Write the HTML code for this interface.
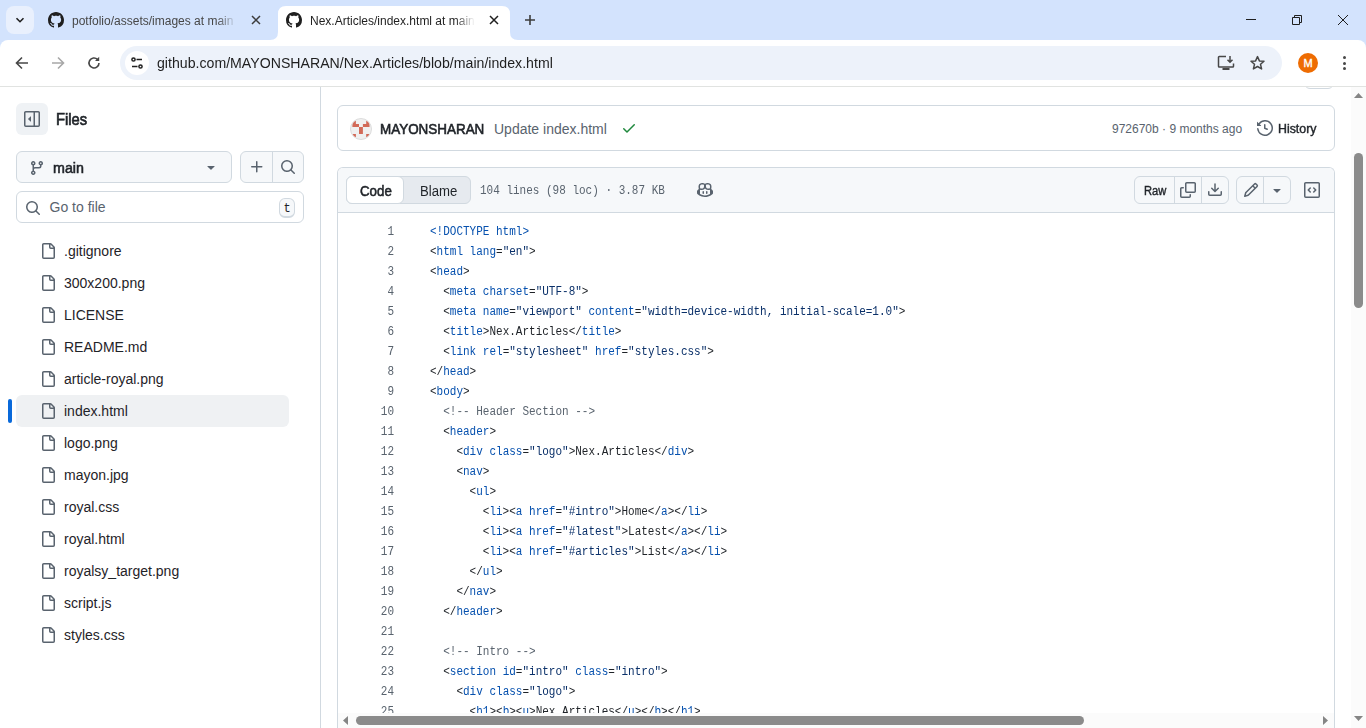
<!DOCTYPE html><html><head><meta charset="utf-8"><style>
*{margin:0;padding:0}
html,body{width:1366px;height:728px;overflow:hidden;background:#fff;position:relative}
.b{position:absolute;display:block}
.t{position:absolute;white-space:pre;line-height:1;}
.ln{position:absolute;left:0;width:56px;text-align:right;font:12px/1 "Liberation Mono",monospace;color:#59636e;white-space:pre;transform:scaleX(0.9167);transform-origin:100% 0}
.cl{position:absolute;left:92px;font:12px/1 "Liberation Mono",monospace;color:#1f2328;white-space:pre;transform:scaleX(0.9167);transform-origin:0 0}
</style></head><body><div class="b" style="left:0px;top:0px;width:1366px;height:48px;background:#d3e3fd"></div>
<div class="b" style="left:6px;top:6px;width:28px;height:28px;background:#e9f0fd;border-radius:8px"></div>
<svg class="b" style="left:14px;top:14px" width="12" height="12" viewBox="0 0 12 12"><path d="M2.5 4.2 6 7.7 9.5 4.2" fill="none" stroke="#1f1f1f" stroke-width="1.6"/></svg>
<svg class="b" style="left:48px;top:12px" width="16" height="16" viewBox="0 0 16 16" fill="#1f1f1f" ><path d="M8 0c4.42 0 8 3.58 8 8a8.013 8.013 0 0 1-5.45 7.59c-.4.08-.55-.17-.55-.38 0-.27.01-1.13.01-2.2 0-.75-.25-1.23-.54-1.48 1.780-.2 3.65-.88 3.65-3.95 0-.88-.31-1.59-.82-2.15.08-.2.36-1.020-.08-2.12 0 0-.67-.22-2.2.82-.64-.18-1.32-.27-2-.27-.68 0-1.36.09-2 .27-1.53-1.03-2.2-.82-2.2-.82-.44 1.1-.16 1.92-.08 2.12-.51.56-.82 1.28-.82 2.15 0 3.06 1.86 3.75 3.64 3.95-.23.2-.44.55-.51 1.07-.46.21-1.61.55-2.33-.66-.15-.24-.6-.83-1.230-.82-.67.01-.27.38.01.53.34.19.73.9.82 1.13.16.45.68 1.31 2.69.94 0 .67.01 1.3.01 1.49 0 .21-.15.45-.55.38A7.995 7.995 0 0 1 0 8c0-4.42 3.58-8 8-8Z"/></svg>
<div class="t" style="left:72px;top:15px;width:163px;height:18px;overflow:hidden;font-size:12px;color:#474747;font-family:'Liberation Sans',sans-serif;-webkit-mask-image:linear-gradient(90deg,#000 145px,transparent 165px)">potfolio/assets/images at main</div>
<svg class="b" style="left:251px;top:15px" width="10" height="10" viewBox="0 0 10 10"><path d="M1 1 9 9M9 1 1 9" stroke="#3c3c3c" stroke-width="1.5"/></svg>
<svg class="b" style="left:270px;top:6px" width="248" height="34" viewBox="0 0 248 34"><path d="M0 34 Q8 34 8 26 V8 Q8 0 16 0 H232 Q240 0 240 8 V26 Q240 34 248 34 Z" fill="#fff"/></svg>
<svg class="b" style="left:286px;top:12px" width="16" height="16" viewBox="0 0 16 16" fill="#1f1f1f" ><path d="M8 0c4.42 0 8 3.58 8 8a8.013 8.013 0 0 1-5.45 7.59c-.4.08-.55-.17-.55-.38 0-.27.01-1.13.01-2.2 0-.75-.25-1.23-.54-1.48 1.780-.2 3.65-.88 3.65-3.95 0-.88-.31-1.59-.82-2.15.08-.2.36-1.020-.08-2.12 0 0-.67-.22-2.2.82-.64-.18-1.32-.27-2-.27-.68 0-1.36.09-2 .27-1.53-1.03-2.2-.82-2.2-.82-.44 1.1-.16 1.92-.08 2.12-.51.56-.82 1.28-.82 2.15 0 3.06 1.86 3.75 3.64 3.95-.23.2-.44.55-.51 1.07-.46.21-1.61.55-2.33-.66-.15-.24-.6-.83-1.230-.82-.67.01-.27.38.01.53.34.19.73.9.82 1.13.16.45.68 1.31 2.69.94 0 .67.01 1.3.01 1.49 0 .21-.15.45-.55.38A7.995 7.995 0 0 1 0 8c0-4.42 3.58-8 8-8Z"/></svg>
<div class="t" style="left:310px;top:15px;width:165px;height:18px;overflow:hidden;font-size:12px;color:#1f1f1f;font-family:'Liberation Sans',sans-serif;-webkit-mask-image:linear-gradient(90deg,#000 145px,transparent 165px)">Nex.Articles/index.html at main</div>
<svg class="b" style="left:489px;top:15px" width="10" height="10" viewBox="0 0 10 10"><path d="M1 1 9 9M9 1 1 9" stroke="#1f1f1f" stroke-width="1.5"/></svg>
<svg class="b" style="left:524px;top:14px" width="12" height="12" viewBox="0 0 12 12"><path d="M6 1V11M1 6H11" stroke="#3c3c3c" stroke-width="1.6"/></svg>
<div class="b" style="left:1246px;top:19px;width:10px;height:1px;background:#1f1f1f"></div>
<svg class="b" style="left:1291px;top:14px" width="12" height="12" viewBox="0 0 12 12"><path d="M1.5 3.5h7v7h-7z M3.5 3.5V1.5h7v7h-2" fill="none" stroke="#1f1f1f" stroke-width="1"/></svg>
<svg class="b" style="left:1337px;top:14px" width="12" height="12" viewBox="0 0 12 12"><path d="M1 1 11 11M11 1 1 11" fill="none" stroke="#1f1f1f" stroke-width="1"/></svg>
<div class="b" style="left:0px;top:40px;width:1366px;height:46px;background:#fff;border-radius:8px 8px 0 0"></div>
<div class="b" style="left:0px;top:86px;width:1366px;height:1px;background:#e1e3e1"></div>
<svg class="b" style="left:14px;top:55px" width="16" height="16" viewBox="0 0 16 16"><path d="M14 8H3M8 2.5 2.5 8 8 13.5" fill="none" stroke="#474747" stroke-width="1.6"/></svg>
<svg class="b" style="left:50px;top:55px" width="16" height="16" viewBox="0 0 16 16"><path d="M2 8H13M8 2.5 13.5 8 8 13.5" fill="none" stroke="#a8a8a8" stroke-width="1.6"/></svg>
<svg class="b" style="left:86px;top:55px" width="16" height="16" viewBox="0 0 16 16"><path d="M13 8A5 5 0 1 1 11.5 4.4" fill="none" stroke="#474747" stroke-width="1.6"/><path d="M13.2 1.8V6H9z" fill="#474747"/></svg>
<div class="b" style="left:120px;top:46px;width:1162px;height:34px;background:#edf2fa;border-radius:17px"></div>
<div class="b" style="left:125px;top:51px;width:24px;height:24px;background:#fff;border-radius:12px"></div>
<svg class="b" style="left:129px;top:55px" width="16" height="16" viewBox="0 0 16 16"><g fill="none" stroke="#1f1f1f" stroke-width="1.5"><circle cx="4.5" cy="4.5" r="1.6"/><path d="M7.5 4.5H13"/><circle cx="11.5" cy="11.5" r="1.6"/><path d="M3 11.5H8.5"/></g></svg>
<div class="t" style="left:157px;top:56.15px;font-size:14px;font-weight:400;color:#1f1f1f;font-family:'Liberation Sans', sans-serif;transform:scaleX(1.01);transform-origin:0 0;">github.com/MAYONSHARAN/Nex.Articles/blob/main/index.html</div>
<svg class="b" style="left:1217px;top:55px" width="18" height="16" viewBox="0 0 18 16"><g fill="none" stroke="#474747" stroke-width="1.5"><path d="M9 1.5H2.3A.8.8 0 0 0 1.5 2.3v9a.8.8 0 0 0 .8.8h13.4a.8.8 0 0 0 .8-.8V8.5"/><path d="M13 1v6.2M10.5 4.8l2.5 2.5 2.5-2.5"/></g><rect x="5.5" y="13" width="7" height="2" fill="#474747"/></svg>
<svg class="b" style="left:1249px;top:55px" width="17" height="16" viewBox="0 0 17 16"><path d="M8.5 1.6 10.4 5.9 15 6.3 11.5 9.3 12.6 13.9 8.5 11.5 4.4 13.9 5.5 9.3 2 6.3 6.6 5.9Z" fill="none" stroke="#474747" stroke-width="1.5" stroke-linejoin="round"/></svg>
<div class="b" style="left:1298px;top:53px;width:20px;height:20px;background:#ee6c02;border-radius:10px"></div>
<div class="t" style="left:1303.6px;top:57.89px;font-size:11px;font-weight:400;color:#fff;font-family:'Liberation Sans', sans-serif;-webkit-text-stroke:0.35px #fff;">M</div>
<div class="b" style="left:1342.5px;top:56.0px;width:3px;height:3px;background:#474747;border-radius:2px"></div>
<div class="b" style="left:1342.5px;top:61.5px;width:3px;height:3px;background:#474747;border-radius:2px"></div>
<div class="b" style="left:1342.5px;top:67.0px;width:3px;height:3px;background:#474747;border-radius:2px"></div>
<div class="b" style="left:0px;top:87px;width:1351px;height:641px;background:#fff"></div>
<div class="b" style="left:1303px;top:87px;width:32px;height:3px;overflow:hidden"><div class="b" style="left:1px;top:-27px;width:30px;height:29px;border:1px solid #d1d9e0;border-radius:6px;box-sizing:border-box"></div></div>
<div class="b" style="left:1351px;top:87px;width:15px;height:641px;background:#fbfbfb"></div>
<svg class="b" style="left:1354px;top:93px" width="9" height="5" viewBox="0 0 9 5"><path d="M0 5 4.5 0 9 5Z" fill="#858585"/></svg>
<svg class="b" style="left:1354px;top:716px" width="9" height="5" viewBox="0 0 9 5"><path d="M0 0 4.5 5 9 0Z" fill="#858585"/></svg>
<div class="b" style="left:1354px;top:153px;width:9px;height:155px;background:#8b8b8b;border-radius:5px"></div>
<div class="b" style="left:320px;top:87px;width:1px;height:641px;background:#d1d9e0"></div>
<div class="b" style="left:16px;top:103px;width:32px;height:32px;background:#eff2f5;border-radius:6px"></div>
<svg class="b" style="left:24px;top:111px" width="16" height="16" viewBox="0 0 16 16" fill="#59636e" ><path d="M1.75 0h12.5C15.216 0 16 .784 16 1.75v12.5A1.75 1.75 0 0 1 14.25 16H1.75A1.75 1.75 0 0 1 0 14.25V1.75C0 .784.784 0 1.75 0ZM1.5 1.75v12.5c0 .138.112.25.25.25H9.5v-13H1.75a.25.25 0 0 0-.25.25ZM11 14.5h3.25a.25.25 0 0 0 .25-.25V1.75a.25.25 0 0 0-.25-.25H11Z"/><path d="M7 5.604v4.792a.25.25 0 0 1-.427.177L4.177 8.177a.25.25 0 0 1 0-.354l2.396-2.396A.25.25 0 0 1 7 5.604Z"/></svg>
<div class="t" style="left:56.3px;top:112.46px;font-size:16px;font-weight:400;color:#1f2328;font-family:'Liberation Sans', sans-serif;transform:scaleX(0.92);transform-origin:0 0;-webkit-text-stroke:0.7px #1f2328;">Files</div>
<div class="b" style="left:16px;top:151px;width:216px;height:32px;background:#f6f8fa;border:1px solid #d1d9e0;border-radius:6px;box-sizing:border-box"></div>
<svg class="b" style="left:29px;top:160px" width="16" height="16" viewBox="0 0 16 16" fill="#59636e" ><path d="M9.5 3.25a2.25 2.25 0 1 1 3 2.122V6A2.5 2.5 0 0 1 10 8.5H6a1 1 0 0 0-1 1v1.128a2.251 2.251 0 1 1-1.5 0V5.372a2.25 2.25 0 1 1 1.5 0v1.836A2.493 2.493 0 0 1 6 7h4a1 1 0 0 0 1-1v-.628A2.25 2.25 0 0 1 9.5 3.25Zm-6 0a.75.75 0 1 0 1.5 0 .75.75 0 0 0-1.5 0Zm8.25-.75a.75.75 0 1 0 0 1.5.75.75 0 0 0 0-1.5ZM4.25 12a.75.75 0 1 0 0 1.5.75.75 0 0 0 0-1.5Z"/></svg>
<div class="t" style="left:53.3px;top:160.65px;font-size:14px;font-weight:400;color:#1f2328;font-family:'Liberation Sans', sans-serif;transform:scaleX(1.02);transform-origin:0 0;-webkit-text-stroke:0.55px #1f2328;">main</div>
<svg class="b" style="left:203px;top:159px" width="16" height="16" viewBox="0 0 16 16" fill="#59636e" ><path d="m4.427 7.427 3.396 3.396a.25.25 0 0 0 .354 0l3.396-3.396A.25.25 0 0 0 11.396 7H4.604a.25.25 0 0 0-.177.427Z"/></svg>
<div class="b" style="left:240px;top:151px;width:64px;height:32px;background:#f6f8fa;border:1px solid #d1d9e0;border-radius:6px;box-sizing:border-box"></div>
<div class="b" style="left:272px;top:151px;width:1px;height:32px;background:#d1d9e0"></div>
<svg class="b" style="left:249px;top:159px" width="16" height="16" viewBox="0 0 16 16" fill="#59636e" ><path d="M7.75 2a.75.75 0 0 1 .75.75V7h4.25a.75.75 0 0 1 0 1.5H8.5v4.25a.75.75 0 0 1-1.5 0V8.5H2.75a.75.75 0 0 1 0-1.5H7V2.75A.75.75 0 0 1 7.75 2Z"/></svg>
<svg class="b" style="left:280px;top:159px" width="16" height="16" viewBox="0 0 16 16" fill="#59636e" ><path d="M10.68 11.74a6 6 0 0 1-7.922-8.982 6 6 0 0 1 8.982 7.922l3.04 3.04a.749.749 0 0 1-.326 1.275.749.749 0 0 1-.734-.215ZM11.5 7a4.499 4.499 0 1 0-8.997 0A4.499 4.499 0 0 0 11.5 7Z"/></svg>
<div class="b" style="left:16px;top:191px;width:288px;height:32px;background:#fff;border:1px solid #d1d9e0;border-radius:6px;box-sizing:border-box"></div>
<svg class="b" style="left:25px;top:200px" width="16" height="16" viewBox="0 0 16 16" fill="#59636e" ><path d="M10.68 11.74a6 6 0 0 1-7.922-8.982 6 6 0 0 1 8.982 7.922l3.04 3.04a.749.749 0 0 1-.326 1.275.749.749 0 0 1-.734-.215ZM11.5 7a4.499 4.499 0 1 0-8.997 0A4.499 4.499 0 0 0 11.5 7Z"/></svg>
<div class="t" style="left:49.5px;top:200.15px;font-size:14px;font-weight:400;color:#59636e;font-family:'Liberation Sans', sans-serif;">Go to file</div>
<div class="b" style="left:279px;top:198px;width:16px;height:20px;background:#f6f8fa;border:1px solid #d1d9e0;border-bottom-width:2px;border-radius:6px;box-sizing:border-box"></div>
<div class="t" style="left:283.5px;top:202.80px;font-size:12px;font-weight:400;color:#1f2328;font-family:'Liberation Mono', monospace;">t</div>
<svg class="b" style="left:40px;top:243px" width="16" height="16" viewBox="0 0 16 16" fill="#59636e" ><path d="M2 1.75C2 .784 2.784 0 3.75 0h6.586c.464 0 .909.184 1.237.513l2.914 2.914c.329.328.513.773.513 1.237v9.586A1.75 1.75 0 0 1 13.25 16h-9.5A1.75 1.75 0 0 1 2 14.25Zm1.75-.25a.25.25 0 0 0-.25.25v12.5c0 .138.112.25.25.25h9.5a.25.25 0 0 0 .25-.25V6h-2.75A1.75 1.75 0 0 1 9 4.25V1.5Zm6.75.062V4.25c0 .138.112.25.25.25h2.688l-.011-.013-2.914-2.914-.013-.011Z"/></svg>
<div class="t" style="left:64px;top:244.15px;font-size:14px;font-weight:400;color:#1f2328;font-family:'Liberation Sans', sans-serif;">.gitignore</div>
<svg class="b" style="left:40px;top:275px" width="16" height="16" viewBox="0 0 16 16" fill="#59636e" ><path d="M2 1.75C2 .784 2.784 0 3.75 0h6.586c.464 0 .909.184 1.237.513l2.914 2.914c.329.328.513.773.513 1.237v9.586A1.75 1.75 0 0 1 13.25 16h-9.5A1.75 1.75 0 0 1 2 14.25Zm1.75-.25a.25.25 0 0 0-.25.25v12.5c0 .138.112.25.25.25h9.5a.25.25 0 0 0 .25-.25V6h-2.75A1.75 1.75 0 0 1 9 4.25V1.5Zm6.75.062V4.25c0 .138.112.25.25.25h2.688l-.011-.013-2.914-2.914-.013-.011Z"/></svg>
<div class="t" style="left:64px;top:276.15px;font-size:14px;font-weight:400;color:#1f2328;font-family:'Liberation Sans', sans-serif;">300x200.png</div>
<svg class="b" style="left:40px;top:307px" width="16" height="16" viewBox="0 0 16 16" fill="#59636e" ><path d="M2 1.75C2 .784 2.784 0 3.75 0h6.586c.464 0 .909.184 1.237.513l2.914 2.914c.329.328.513.773.513 1.237v9.586A1.75 1.75 0 0 1 13.25 16h-9.5A1.75 1.75 0 0 1 2 14.25Zm1.75-.25a.25.25 0 0 0-.25.25v12.5c0 .138.112.25.25.25h9.5a.25.25 0 0 0 .25-.25V6h-2.75A1.75 1.75 0 0 1 9 4.25V1.5Zm6.75.062V4.25c0 .138.112.25.25.25h2.688l-.011-.013-2.914-2.914-.013-.011Z"/></svg>
<div class="t" style="left:64px;top:308.15px;font-size:14px;font-weight:400;color:#1f2328;font-family:'Liberation Sans', sans-serif;">LICENSE</div>
<svg class="b" style="left:40px;top:339px" width="16" height="16" viewBox="0 0 16 16" fill="#59636e" ><path d="M2 1.75C2 .784 2.784 0 3.75 0h6.586c.464 0 .909.184 1.237.513l2.914 2.914c.329.328.513.773.513 1.237v9.586A1.75 1.75 0 0 1 13.25 16h-9.5A1.75 1.75 0 0 1 2 14.25Zm1.75-.25a.25.25 0 0 0-.25.25v12.5c0 .138.112.25.25.25h9.5a.25.25 0 0 0 .25-.25V6h-2.75A1.75 1.75 0 0 1 9 4.25V1.5Zm6.75.062V4.25c0 .138.112.25.25.25h2.688l-.011-.013-2.914-2.914-.013-.011Z"/></svg>
<div class="t" style="left:64px;top:340.15px;font-size:14px;font-weight:400;color:#1f2328;font-family:'Liberation Sans', sans-serif;">README.md</div>
<svg class="b" style="left:40px;top:371px" width="16" height="16" viewBox="0 0 16 16" fill="#59636e" ><path d="M2 1.75C2 .784 2.784 0 3.75 0h6.586c.464 0 .909.184 1.237.513l2.914 2.914c.329.328.513.773.513 1.237v9.586A1.75 1.75 0 0 1 13.25 16h-9.5A1.75 1.75 0 0 1 2 14.25Zm1.75-.25a.25.25 0 0 0-.25.25v12.5c0 .138.112.25.25.25h9.5a.25.25 0 0 0 .25-.25V6h-2.75A1.75 1.75 0 0 1 9 4.25V1.5Zm6.75.062V4.25c0 .138.112.25.25.25h2.688l-.011-.013-2.914-2.914-.013-.011Z"/></svg>
<div class="t" style="left:64px;top:372.15px;font-size:14px;font-weight:400;color:#1f2328;font-family:'Liberation Sans', sans-serif;">article-royal.png</div>
<div class="b" style="left:16px;top:395px;width:273px;height:32px;background:#eff1f3;border-radius:6px"></div>
<div class="b" style="left:8px;top:399px;width:4px;height:24px;background:#0969da;border-radius:2px"></div>
<svg class="b" style="left:40px;top:403px" width="16" height="16" viewBox="0 0 16 16" fill="#59636e" ><path d="M2 1.75C2 .784 2.784 0 3.75 0h6.586c.464 0 .909.184 1.237.513l2.914 2.914c.329.328.513.773.513 1.237v9.586A1.75 1.75 0 0 1 13.25 16h-9.5A1.75 1.75 0 0 1 2 14.25Zm1.75-.25a.25.25 0 0 0-.25.25v12.5c0 .138.112.25.25.25h9.5a.25.25 0 0 0 .25-.25V6h-2.75A1.75 1.75 0 0 1 9 4.25V1.5Zm6.75.062V4.25c0 .138.112.25.25.25h2.688l-.011-.013-2.914-2.914-.013-.011Z"/></svg>
<div class="t" style="left:64px;top:404.15px;font-size:14px;font-weight:400;color:#1f2328;font-family:'Liberation Sans', sans-serif;">index.html</div>
<svg class="b" style="left:40px;top:435px" width="16" height="16" viewBox="0 0 16 16" fill="#59636e" ><path d="M2 1.75C2 .784 2.784 0 3.75 0h6.586c.464 0 .909.184 1.237.513l2.914 2.914c.329.328.513.773.513 1.237v9.586A1.75 1.75 0 0 1 13.25 16h-9.5A1.75 1.75 0 0 1 2 14.25Zm1.75-.25a.25.25 0 0 0-.25.25v12.5c0 .138.112.25.25.25h9.5a.25.25 0 0 0 .25-.25V6h-2.75A1.75 1.75 0 0 1 9 4.25V1.5Zm6.75.062V4.25c0 .138.112.25.25.25h2.688l-.011-.013-2.914-2.914-.013-.011Z"/></svg>
<div class="t" style="left:64px;top:436.15px;font-size:14px;font-weight:400;color:#1f2328;font-family:'Liberation Sans', sans-serif;">logo.png</div>
<svg class="b" style="left:40px;top:467px" width="16" height="16" viewBox="0 0 16 16" fill="#59636e" ><path d="M2 1.75C2 .784 2.784 0 3.75 0h6.586c.464 0 .909.184 1.237.513l2.914 2.914c.329.328.513.773.513 1.237v9.586A1.75 1.75 0 0 1 13.25 16h-9.5A1.75 1.75 0 0 1 2 14.25Zm1.75-.25a.25.25 0 0 0-.25.25v12.5c0 .138.112.25.25.25h9.5a.25.25 0 0 0 .25-.25V6h-2.75A1.75 1.75 0 0 1 9 4.25V1.5Zm6.75.062V4.25c0 .138.112.25.25.25h2.688l-.011-.013-2.914-2.914-.013-.011Z"/></svg>
<div class="t" style="left:64px;top:468.15px;font-size:14px;font-weight:400;color:#1f2328;font-family:'Liberation Sans', sans-serif;">mayon.jpg</div>
<svg class="b" style="left:40px;top:499px" width="16" height="16" viewBox="0 0 16 16" fill="#59636e" ><path d="M2 1.75C2 .784 2.784 0 3.75 0h6.586c.464 0 .909.184 1.237.513l2.914 2.914c.329.328.513.773.513 1.237v9.586A1.75 1.75 0 0 1 13.25 16h-9.5A1.75 1.75 0 0 1 2 14.25Zm1.75-.25a.25.25 0 0 0-.25.25v12.5c0 .138.112.25.25.25h9.5a.25.25 0 0 0 .25-.25V6h-2.75A1.75 1.75 0 0 1 9 4.25V1.5Zm6.75.062V4.25c0 .138.112.25.25.25h2.688l-.011-.013-2.914-2.914-.013-.011Z"/></svg>
<div class="t" style="left:64px;top:500.15px;font-size:14px;font-weight:400;color:#1f2328;font-family:'Liberation Sans', sans-serif;">royal.css</div>
<svg class="b" style="left:40px;top:531px" width="16" height="16" viewBox="0 0 16 16" fill="#59636e" ><path d="M2 1.75C2 .784 2.784 0 3.75 0h6.586c.464 0 .909.184 1.237.513l2.914 2.914c.329.328.513.773.513 1.237v9.586A1.75 1.75 0 0 1 13.25 16h-9.5A1.75 1.75 0 0 1 2 14.25Zm1.75-.25a.25.25 0 0 0-.25.25v12.5c0 .138.112.25.25.25h9.5a.25.25 0 0 0 .25-.25V6h-2.75A1.75 1.75 0 0 1 9 4.25V1.5Zm6.75.062V4.25c0 .138.112.25.25.25h2.688l-.011-.013-2.914-2.914-.013-.011Z"/></svg>
<div class="t" style="left:64px;top:532.15px;font-size:14px;font-weight:400;color:#1f2328;font-family:'Liberation Sans', sans-serif;">royal.html</div>
<svg class="b" style="left:40px;top:563px" width="16" height="16" viewBox="0 0 16 16" fill="#59636e" ><path d="M2 1.75C2 .784 2.784 0 3.75 0h6.586c.464 0 .909.184 1.237.513l2.914 2.914c.329.328.513.773.513 1.237v9.586A1.75 1.75 0 0 1 13.25 16h-9.5A1.75 1.75 0 0 1 2 14.25Zm1.75-.25a.25.25 0 0 0-.25.25v12.5c0 .138.112.25.25.25h9.5a.25.25 0 0 0 .25-.25V6h-2.75A1.75 1.75 0 0 1 9 4.25V1.5Zm6.75.062V4.25c0 .138.112.25.25.25h2.688l-.011-.013-2.914-2.914-.013-.011Z"/></svg>
<div class="t" style="left:64px;top:564.15px;font-size:14px;font-weight:400;color:#1f2328;font-family:'Liberation Sans', sans-serif;">royalsy_target.png</div>
<svg class="b" style="left:40px;top:595px" width="16" height="16" viewBox="0 0 16 16" fill="#59636e" ><path d="M2 1.75C2 .784 2.784 0 3.75 0h6.586c.464 0 .909.184 1.237.513l2.914 2.914c.329.328.513.773.513 1.237v9.586A1.75 1.75 0 0 1 13.25 16h-9.5A1.75 1.75 0 0 1 2 14.25Zm1.75-.25a.25.25 0 0 0-.25.25v12.5c0 .138.112.25.25.25h9.5a.25.25 0 0 0 .25-.25V6h-2.75A1.75 1.75 0 0 1 9 4.25V1.5Zm6.75.062V4.25c0 .138.112.25.25.25h2.688l-.011-.013-2.914-2.914-.013-.011Z"/></svg>
<div class="t" style="left:64px;top:596.15px;font-size:14px;font-weight:400;color:#1f2328;font-family:'Liberation Sans', sans-serif;">script.js</div>
<svg class="b" style="left:40px;top:627px" width="16" height="16" viewBox="0 0 16 16" fill="#59636e" ><path d="M2 1.75C2 .784 2.784 0 3.75 0h6.586c.464 0 .909.184 1.237.513l2.914 2.914c.329.328.513.773.513 1.237v9.586A1.75 1.75 0 0 1 13.25 16h-9.5A1.75 1.75 0 0 1 2 14.25Zm1.75-.25a.25.25 0 0 0-.25.25v12.5c0 .138.112.25.25.25h9.5a.25.25 0 0 0 .25-.25V6h-2.75A1.75 1.75 0 0 1 9 4.25V1.5Zm6.75.062V4.25c0 .138.112.25.25.25h2.688l-.011-.013-2.914-2.914-.013-.011Z"/></svg>
<div class="t" style="left:64px;top:628.15px;font-size:14px;font-weight:400;color:#1f2328;font-family:'Liberation Sans', sans-serif;">styles.css</div>
<div class="b" style="left:337px;top:105px;width:998px;height:46px;border:1px solid #d1d9e0;border-radius:6px;box-sizing:border-box"></div>
<svg class="b" style="left:350px;top:118px" width="22" height="22" viewBox="0 0 22 22"><defs><clipPath id="avc"><circle cx="11" cy="11" r="10"/></clipPath></defs><circle cx="11" cy="11" r="10.5" fill="#f0f0f0" stroke="#dcdcdc" stroke-width="1"/><g fill="#d26a58" clip-path="url(#avc)"><path d="M2.4 2.8H5.9V5.9H9V9H2.4Z"/><path d="M19.5 2.8H16.2V5.9H12.9V9H19.5Z"/><rect x="9" y="9" width="3.9" height="7"/><rect x="2.4" y="16" width="3.5" height="3.1"/><rect x="16.2" y="16" width="3.3" height="3.1"/></g></svg>
<div class="t" style="left:380.3px;top:122.15px;font-size:14px;font-weight:400;color:#1f2328;font-family:'Liberation Sans', sans-serif;transform:scaleX(0.96);transform-origin:0 0;-webkit-text-stroke:0.6px #1f2328;">MAYONSHARAN</div>
<div class="t" style="left:494px;top:122.15px;font-size:14px;font-weight:400;color:#59636e;font-family:'Liberation Sans', sans-serif;">Update index.html</div>
<svg class="b" style="left:621px;top:120px" width="16" height="16" viewBox="0 0 16 16" fill="#1f883d" ><path d="M13.78 4.22a.75.75 0 0 1 0 1.06l-7.25 7.25a.75.75 0 0 1-1.06 0L2.22 9.28a.751.751 0 0 1 .018-1.042.751.751 0 0 1 1.042-.018L6 10.94l6.72-6.72a.75.75 0 0 1 1.06 0Z"/></svg>
<div class="t" style="left:1112px;top:122.84px;font-size:12px;font-weight:400;color:#59636e;font-family:'Liberation Sans', sans-serif;">972670b · 9 months ago</div>
<svg class="b" style="left:1257px;top:120px" width="16" height="16" viewBox="0 0 16 16" fill="#59636e" ><path d="m.427 1.927 1.215 1.215a8.002 8.002 0 1 1-1.6 5.685.75.75 0 1 1 1.493-.154 6.5 6.5 0 1 0 1.18-4.458l1.358 1.358A.25.25 0 0 1 3.896 6H.25A.25.25 0 0 1 0 5.75V2.104a.25.25 0 0 1 .427-.177ZM7.75 4a.75.75 0 0 1 .75.75v2.992l2.028.812a.75.75 0 0 1-.557 1.392l-2.5-1A.751.751 0 0 1 7 8.25v-3.5A.75.75 0 0 1 7.75 4Z"/></svg>
<div class="t" style="left:1278.3px;top:122.84px;font-size:12px;font-weight:400;color:#1f2328;font-family:'Liberation Sans', sans-serif;transform:scaleX(1.03);transform-origin:0 0;-webkit-text-stroke:0.4px #1f2328;">History</div>
<div class="b" style="left:337px;top:167px;width:998px;height:561px;border:1px solid #d1d9e0;border-bottom:none;border-radius:6px 6px 0 0;box-sizing:border-box"></div>
<div class="b" style="left:338px;top:168px;width:996px;height:44px;background:#f6f8fa;border-radius:5px 5px 0 0"></div>
<div class="b" style="left:337px;top:212px;width:998px;height:1px;background:#d1d9e0"></div>
<div class="b" style="left:346px;top:176px;width:125px;height:28px;background:#e6eaef;border:1px solid #d1d9e0;border-radius:6px;box-sizing:border-box"></div>
<div class="b" style="left:346px;top:176px;width:58px;height:28px;background:#fff;border:1px solid #d1d9e0;border-radius:6px;box-sizing:border-box"></div>
<div class="t" style="left:360.3px;top:184.15px;font-size:14px;font-weight:400;color:#1f2328;font-family:'Liberation Sans', sans-serif;transform:scaleX(0.95);transform-origin:0 0;-webkit-text-stroke:0.55px #1f2328;">Code</div>
<div class="t" style="left:420px;top:184.15px;font-size:14px;font-weight:400;color:#1f2328;font-family:'Liberation Sans', sans-serif;transform:scaleX(0.94);transform-origin:0 0;">Blame</div>
<div class="t" style="left:480px;top:185.10px;font-size:12px;font-weight:400;color:#59636e;font-family:'Liberation Mono', monospace;transform:scaleX(0.9167);transform-origin:0 0;">104 lines (98 loc) · 3.87 KB</div>
<svg class="b" style="left:697px;top:182px" width="16" height="16" viewBox="0 0 16 16" fill="#59636e" ><path d="M7.998 15.035c-4.562 0-7.873-2.914-7.998-3.749V9.338c.085-.628.677-1.686 1.588-2.065.013-.07.024-.143.036-.218.029-.183.06-.384.126-.612-.201-.508-.254-1.084-.254-1.656 0-.87.128-1.769.693-2.484.579-.733 1.494-1.124 2.724-1.261 1.206-.134 2.262.034 2.944.765.05.053.096.108.139.165.044-.057.094-.112.143-.165.682-.731 1.738-.899 2.944-.765 1.23.137 2.145.528 2.724 1.261.566.715.693 1.614.693 2.484 0 .572-.053 1.148-.254 1.656.066.228.098.429.126.612.012.076.024.148.037.218.924.385 1.522 1.471 1.591 2.095v1.872c0 .766-3.351 3.795-8.002 3.795Zm0-1.485c2.28 0 4.584-1.11 5.002-1.433V7.862l-.023-.116c-.49.21-1.075.291-1.727.291-1.146 0-2.059-.327-2.71-.991A3.222 3.222 0 0 1 8 6.303a3.24 3.24 0 0 1-.544.743c-.65.664-1.563.991-2.71.991-.652 0-1.236-.081-1.727-.291l-.023.116v4.255c.419.323 2.722 1.433 5.002 1.433ZM6.762 2.83c-.193-.206-.637-.413-1.682-.297-1.019.113-1.479.404-1.713.7-.247.312-.369.789-.369 1.554 0 .793.129 1.171.308 1.371.162.181.519.379 1.442.379.853 0 1.339-.235 1.638-.54.315-.322.527-.827.617-1.553.117-.935-.037-1.395-.241-1.614Zm4.155-.297c-1.044-.116-1.488.091-1.681.297-.204.219-.359.679-.242 1.614.091.726.303 1.231.618 1.553.299.305.784.54 1.638.54.922 0 1.28-.198 1.442-.379.179-.2.308-.578.308-1.371 0-.765-.123-1.242-.37-1.554-.233-.296-.693-.587-1.713-.7Z"/><path d="M6.25 9.037a.75.75 0 0 1 .75.75v1.501a.75.75 0 0 1-1.5 0V9.787a.75.75 0 0 1 .75-.75Zm4.25.75v1.501a.75.75 0 0 1-1.5 0V9.787a.75.75 0 0 1 1.5 0Z"/></svg>
<div class="b" style="left:1134px;top:176px;width:95px;height:28px;background:#f6f8fa;border:1px solid #d1d9e0;border-radius:6px;box-sizing:border-box"></div>
<div class="b" style="left:1174px;top:176px;width:1px;height:28px;background:#d1d9e0"></div>
<div class="b" style="left:1201px;top:176px;width:1px;height:28px;background:#d1d9e0"></div>
<div class="t" style="left:1143.8px;top:184.84px;font-size:12px;font-weight:400;color:#1f2328;font-family:'Liberation Sans', sans-serif;transform:scaleX(0.93);transform-origin:0 0;-webkit-text-stroke:0.4px #1f2328;">Raw</div>
<svg class="b" style="left:1180px;top:182px" width="16" height="16" viewBox="0 0 16 16" fill="#59636e" ><path d="M0 6.75C0 5.784.784 5 1.75 5h1.5a.75.75 0 0 1 0 1.5h-1.5a.25.25 0 0 0-.25.25v7.5c0 .138.112.25.25.25h7.5a.25.25 0 0 0 .25-.25v-1.5a.75.75 0 0 1 1.5 0v1.5A1.75 1.75 0 0 1 9.25 16h-7.5A1.75 1.75 0 0 1 0 14.25Z"/><path d="M5 1.75C5 .784 5.784 0 6.75 0h7.5C15.216 0 16 .784 16 1.75v7.5A1.75 1.75 0 0 1 14.25 11h-7.5A1.75 1.75 0 0 1 5 9.25Zm1.75-.25a.25.25 0 0 0-.25.25v7.5c0 .138.112.25.25.25h7.5a.25.25 0 0 0 .25-.25v-7.5a.25.25 0 0 0-.25-.25Z"/></svg>
<svg class="b" style="left:1207px;top:182px" width="16" height="16" viewBox="0 0 16 16" fill="#59636e" ><path d="M2.75 14A1.75 1.75 0 0 1 1 12.25v-2.5a.75.75 0 0 1 1.5 0v2.5c0 .138.112.25.25.25h10.5a.25.25 0 0 0 .25-.25v-2.5a.75.75 0 0 1 1.5 0v2.5A1.75 1.75 0 0 1 13.25 14Z"/><path d="M7.25 7.689V2a.75.75 0 0 1 1.5 0v5.689l1.97-1.969a.749.749 0 1 1 1.06 1.06l-3.25 3.25a.749.749 0 0 1-1.06 0L4.22 6.78a.749.749 0 1 1 1.06-1.06l1.97 1.969Z"/></svg>
<div class="b" style="left:1236px;top:176px;width:55px;height:28px;background:#f6f8fa;border:1px solid #d1d9e0;border-radius:6px;box-sizing:border-box"></div>
<div class="b" style="left:1263px;top:176px;width:1px;height:28px;background:#d1d9e0"></div>
<svg class="b" style="left:1243px;top:182px" width="16" height="16" viewBox="0 0 16 16" fill="#59636e" ><path d="M11.013 1.427a1.75 1.75 0 0 1 2.474 0l1.086 1.086a1.75 1.75 0 0 1 0 2.474l-8.61 8.61c-.21.21-.47.364-.756.445l-3.251.93a.75.75 0 0 1-.927-.928l.929-3.25c.081-.286.235-.547.445-.758l8.61-8.61Zm.176 4.823L9.75 4.81l-6.286 6.287a.253.253 0 0 0-.064.108l-.558 1.953 1.953-.558a.253.253 0 0 0 .108-.064Zm1.238-3.763a.25.25 0 0 0-.354 0L10.811 3.75l1.439 1.44 1.263-1.263a.25.25 0 0 0 0-.354Z"/></svg>
<svg class="b" style="left:1269px;top:182px" width="16" height="16" viewBox="0 0 16 16" fill="#59636e" ><path d="m4.427 7.427 3.396 3.396a.25.25 0 0 0 .354 0l3.396-3.396A.25.25 0 0 0 11.396 7H4.604a.25.25 0 0 0-.177.427Z"/></svg>
<svg class="b" style="left:1304px;top:182px" width="16" height="16" viewBox="0 0 16 16" fill="#59636e" ><path d="M0 1.75C0 .784.784 0 1.75 0h12.5C15.216 0 16 .784 16 1.75v12.5A1.75 1.75 0 0 1 14.25 16H1.75A1.75 1.75 0 0 1 0 14.25Zm1.75-.25a.25.25 0 0 0-.25.25v12.5c0 .138.112.25.25.25h12.5a.25.25 0 0 0 .25-.25V1.75a.25.25 0 0 0-.25-.25Zm7.47 3.97a.75.75 0 0 1 1.06 0l2 2a.75.75 0 0 1 0 1.06l-2 2a.749.749 0 0 1-1.275-.326.749.749 0 0 1 .215-.734L10.69 8 9.22 6.53a.75.75 0 0 1 0-1.06ZM6.78 6.53 5.31 8l1.47 1.47a.749.749 0 0 1-.326 1.275.749.749 0 0 1-.734-.215l-2-2a.75.75 0 0 1 0-1.06l2-2a.751.751 0 0 1 1.042.018.751.751 0 0 1 .018 1.042Z"/></svg>
<div class="b" style="left:338px;top:213px;width:996px;height:500px;overflow:hidden;background:#fff"><div class="ln" style="top:12.80px">1</div><div class="cl" style="top:12.80px"><span style="color:#0550ae">&lt;!DOCTYPE html&gt;</span></div><div class="ln" style="top:32.80px">2</div><div class="cl" style="top:32.80px"><span style="color:#1f2328"></span><span style="color:#1f2328">&lt;</span><span style="color:#0550ae">html</span> <span style="color:#0550ae">lang</span><span style="color:#1f2328">=</span><span style="color:#0a3069">"en"</span><span style="color:#1f2328">&gt;</span><span style="color:#1f2328"></span></div><div class="ln" style="top:52.80px">3</div><div class="cl" style="top:52.80px"><span style="color:#1f2328"></span><span style="color:#1f2328">&lt;</span><span style="color:#0550ae">head</span><span style="color:#1f2328">&gt;</span><span style="color:#1f2328"></span></div><div class="ln" style="top:72.80px">4</div><div class="cl" style="top:72.80px"><span style="color:#1f2328">  </span><span style="color:#1f2328">&lt;</span><span style="color:#0550ae">meta</span> <span style="color:#0550ae">charset</span><span style="color:#1f2328">=</span><span style="color:#0a3069">"UTF-8"</span><span style="color:#1f2328">&gt;</span><span style="color:#1f2328"></span></div><div class="ln" style="top:92.80px">5</div><div class="cl" style="top:92.80px"><span style="color:#1f2328">  </span><span style="color:#1f2328">&lt;</span><span style="color:#0550ae">meta</span> <span style="color:#0550ae">name</span><span style="color:#1f2328">=</span><span style="color:#0a3069">"viewport"</span> <span style="color:#0550ae">content</span><span style="color:#1f2328">=</span><span style="color:#0a3069">"width=device-width, initial-scale=1.0"</span><span style="color:#1f2328">&gt;</span><span style="color:#1f2328"></span></div><div class="ln" style="top:112.80px">6</div><div class="cl" style="top:112.80px"><span style="color:#1f2328">  </span><span style="color:#1f2328">&lt;</span><span style="color:#0550ae">title</span><span style="color:#1f2328">&gt;</span><span style="color:#1f2328">Nex.Articles</span><span style="color:#1f2328">&lt;/</span><span style="color:#0550ae">title</span><span style="color:#1f2328">&gt;</span><span style="color:#1f2328"></span></div><div class="ln" style="top:132.80px">7</div><div class="cl" style="top:132.80px"><span style="color:#1f2328">  </span><span style="color:#1f2328">&lt;</span><span style="color:#0550ae">link</span> <span style="color:#0550ae">rel</span><span style="color:#1f2328">=</span><span style="color:#0a3069">"stylesheet"</span> <span style="color:#0550ae">href</span><span style="color:#1f2328">=</span><span style="color:#0a3069">"styles.css"</span><span style="color:#1f2328">&gt;</span><span style="color:#1f2328"></span></div><div class="ln" style="top:152.80px">8</div><div class="cl" style="top:152.80px"><span style="color:#1f2328"></span><span style="color:#1f2328">&lt;/</span><span style="color:#0550ae">head</span><span style="color:#1f2328">&gt;</span><span style="color:#1f2328"></span></div><div class="ln" style="top:172.80px">9</div><div class="cl" style="top:172.80px"><span style="color:#1f2328"></span><span style="color:#1f2328">&lt;</span><span style="color:#0550ae">body</span><span style="color:#1f2328">&gt;</span><span style="color:#1f2328"></span></div><div class="ln" style="top:192.80px">10</div><div class="cl" style="top:192.80px"><span style="color:#59636e">  &lt;!-- Header Section --&gt;</span></div><div class="ln" style="top:212.80px">11</div><div class="cl" style="top:212.80px"><span style="color:#1f2328">  </span><span style="color:#1f2328">&lt;</span><span style="color:#0550ae">header</span><span style="color:#1f2328">&gt;</span><span style="color:#1f2328"></span></div><div class="ln" style="top:232.80px">12</div><div class="cl" style="top:232.80px"><span style="color:#1f2328">    </span><span style="color:#1f2328">&lt;</span><span style="color:#0550ae">div</span> <span style="color:#0550ae">class</span><span style="color:#1f2328">=</span><span style="color:#0a3069">"logo"</span><span style="color:#1f2328">&gt;</span><span style="color:#1f2328">Nex.Articles</span><span style="color:#1f2328">&lt;/</span><span style="color:#0550ae">div</span><span style="color:#1f2328">&gt;</span><span style="color:#1f2328"></span></div><div class="ln" style="top:252.80px">13</div><div class="cl" style="top:252.80px"><span style="color:#1f2328">    </span><span style="color:#1f2328">&lt;</span><span style="color:#0550ae">nav</span><span style="color:#1f2328">&gt;</span><span style="color:#1f2328"></span></div><div class="ln" style="top:272.80px">14</div><div class="cl" style="top:272.80px"><span style="color:#1f2328">      </span><span style="color:#1f2328">&lt;</span><span style="color:#0550ae">ul</span><span style="color:#1f2328">&gt;</span><span style="color:#1f2328"></span></div><div class="ln" style="top:292.80px">15</div><div class="cl" style="top:292.80px"><span style="color:#1f2328">        </span><span style="color:#1f2328">&lt;</span><span style="color:#0550ae">li</span><span style="color:#1f2328">&gt;</span><span style="color:#1f2328"></span><span style="color:#1f2328">&lt;</span><span style="color:#0550ae">a</span> <span style="color:#0550ae">href</span><span style="color:#1f2328">=</span><span style="color:#0a3069">"#intro"</span><span style="color:#1f2328">&gt;</span><span style="color:#1f2328">Home</span><span style="color:#1f2328">&lt;/</span><span style="color:#0550ae">a</span><span style="color:#1f2328">&gt;</span><span style="color:#1f2328"></span><span style="color:#1f2328">&lt;/</span><span style="color:#0550ae">li</span><span style="color:#1f2328">&gt;</span><span style="color:#1f2328"></span></div><div class="ln" style="top:312.80px">16</div><div class="cl" style="top:312.80px"><span style="color:#1f2328">        </span><span style="color:#1f2328">&lt;</span><span style="color:#0550ae">li</span><span style="color:#1f2328">&gt;</span><span style="color:#1f2328"></span><span style="color:#1f2328">&lt;</span><span style="color:#0550ae">a</span> <span style="color:#0550ae">href</span><span style="color:#1f2328">=</span><span style="color:#0a3069">"#latest"</span><span style="color:#1f2328">&gt;</span><span style="color:#1f2328">Latest</span><span style="color:#1f2328">&lt;/</span><span style="color:#0550ae">a</span><span style="color:#1f2328">&gt;</span><span style="color:#1f2328"></span><span style="color:#1f2328">&lt;/</span><span style="color:#0550ae">li</span><span style="color:#1f2328">&gt;</span><span style="color:#1f2328"></span></div><div class="ln" style="top:332.80px">17</div><div class="cl" style="top:332.80px"><span style="color:#1f2328">        </span><span style="color:#1f2328">&lt;</span><span style="color:#0550ae">li</span><span style="color:#1f2328">&gt;</span><span style="color:#1f2328"></span><span style="color:#1f2328">&lt;</span><span style="color:#0550ae">a</span> <span style="color:#0550ae">href</span><span style="color:#1f2328">=</span><span style="color:#0a3069">"#articles"</span><span style="color:#1f2328">&gt;</span><span style="color:#1f2328">List</span><span style="color:#1f2328">&lt;/</span><span style="color:#0550ae">a</span><span style="color:#1f2328">&gt;</span><span style="color:#1f2328"></span><span style="color:#1f2328">&lt;/</span><span style="color:#0550ae">li</span><span style="color:#1f2328">&gt;</span><span style="color:#1f2328"></span></div><div class="ln" style="top:352.80px">18</div><div class="cl" style="top:352.80px"><span style="color:#1f2328">      </span><span style="color:#1f2328">&lt;/</span><span style="color:#0550ae">ul</span><span style="color:#1f2328">&gt;</span><span style="color:#1f2328"></span></div><div class="ln" style="top:372.80px">19</div><div class="cl" style="top:372.80px"><span style="color:#1f2328">    </span><span style="color:#1f2328">&lt;/</span><span style="color:#0550ae">nav</span><span style="color:#1f2328">&gt;</span><span style="color:#1f2328"></span></div><div class="ln" style="top:392.80px">20</div><div class="cl" style="top:392.80px"><span style="color:#1f2328">  </span><span style="color:#1f2328">&lt;/</span><span style="color:#0550ae">header</span><span style="color:#1f2328">&gt;</span><span style="color:#1f2328"></span></div><div class="ln" style="top:412.80px">21</div><div class="cl" style="top:412.80px"><span style="color:#1f2328"></span></div><div class="ln" style="top:432.80px">22</div><div class="cl" style="top:432.80px"><span style="color:#59636e">  &lt;!-- Intro --&gt;</span></div><div class="ln" style="top:452.80px">23</div><div class="cl" style="top:452.80px"><span style="color:#1f2328">  </span><span style="color:#1f2328">&lt;</span><span style="color:#0550ae">section</span> <span style="color:#0550ae">id</span><span style="color:#1f2328">=</span><span style="color:#0a3069">"intro"</span> <span style="color:#0550ae">class</span><span style="color:#1f2328">=</span><span style="color:#0a3069">"intro"</span><span style="color:#1f2328">&gt;</span><span style="color:#1f2328"></span></div><div class="ln" style="top:472.80px">24</div><div class="cl" style="top:472.80px"><span style="color:#1f2328">    </span><span style="color:#1f2328">&lt;</span><span style="color:#0550ae">div</span> <span style="color:#0550ae">class</span><span style="color:#1f2328">=</span><span style="color:#0a3069">"logo"</span><span style="color:#1f2328">&gt;</span><span style="color:#1f2328"></span></div><div class="ln" style="top:492.80px">25</div><div class="cl" style="top:492.80px"><span style="color:#1f2328">      </span><span style="color:#1f2328">&lt;</span><span style="color:#0550ae">h1</span><span style="color:#1f2328">&gt;</span><span style="color:#1f2328"></span><span style="color:#1f2328">&lt;</span><span style="color:#0550ae">b</span><span style="color:#1f2328">&gt;</span><span style="color:#1f2328"></span><span style="color:#1f2328">&lt;</span><span style="color:#0550ae">u</span><span style="color:#1f2328">&gt;</span><span style="color:#1f2328">Nex.Articles</span><span style="color:#1f2328">&lt;/</span><span style="color:#0550ae">u</span><span style="color:#1f2328">&gt;</span><span style="color:#1f2328"></span><span style="color:#1f2328">&lt;/</span><span style="color:#0550ae">b</span><span style="color:#1f2328">&gt;</span><span style="color:#1f2328"></span><span style="color:#1f2328">&lt;/</span><span style="color:#0550ae">h1</span><span style="color:#1f2328">&gt;</span><span style="color:#1f2328"></span></div><div class="ln" style="top:512.80px">26</div><div class="cl" style="top:512.80px"><span style="color:#1f2328">      </span><span style="color:#1f2328">&lt;</span><span style="color:#0550ae">p</span><span style="color:#1f2328">&gt;</span><span style="color:#1f2328">Welcome</span><span style="color:#1f2328">&lt;/</span><span style="color:#0550ae">p</span><span style="color:#1f2328">&gt;</span><span style="color:#1f2328"></span></div></div>
<div class="b" style="left:338px;top:713px;width:996px;height:15px;background:#fbfbfb"></div>
<svg class="b" style="left:343px;top:716px" width="5" height="9" viewBox="0 0 5 9"><path d="M5 0 0 4.5 5 9Z" fill="#858585"/></svg>
<svg class="b" style="left:1323px;top:716px" width="5" height="9" viewBox="0 0 5 9"><path d="M0 0 5 4.5 0 9Z" fill="#858585"/></svg>
<div class="b" style="left:356px;top:716px;width:728px;height:9px;background:#8b8b8b;border-radius:5px"></div></body></html>
